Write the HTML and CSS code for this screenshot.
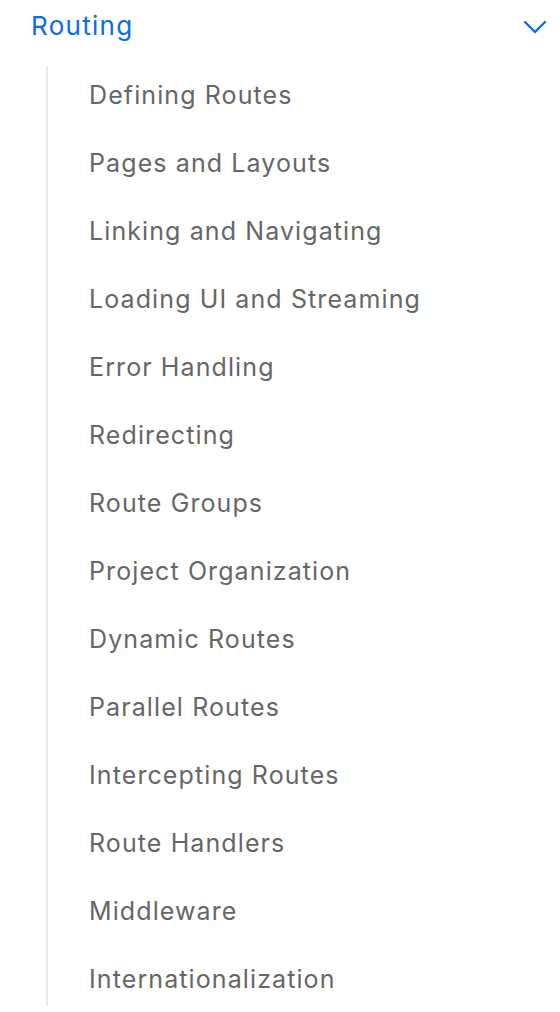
FILE: index.html
```html
<!DOCTYPE html>
<html>
<head>
<meta charset="utf-8">
<link rel="stylesheet" href="styles.css">
</head>
<body>
<nav class="sidebar">
  <div class="section-header">
    <span class="section-title">Routing</span>
    <svg class="chevron" width="24" height="16" viewBox="0 0 24 16" fill="none">
      <path d="M2 3 L12 13 L22 3" stroke="currentColor" stroke-width="2.4" stroke-linecap="round" stroke-linejoin="round"/>
    </svg>
  </div>
  <ul class="sub-list">
    <li class="sub-item">Defining Routes</li>
    <li class="sub-item">Pages and Layouts</li>
    <li class="sub-item">Linking and Navigating</li>
    <li class="sub-item">Loading UI and Streaming</li>
    <li class="sub-item">Error Handling</li>
    <li class="sub-item">Redirecting</li>
    <li class="sub-item">Route Groups</li>
    <li class="sub-item">Project Organization</li>
    <li class="sub-item">Dynamic Routes</li>
    <li class="sub-item">Parallel Routes</li>
    <li class="sub-item">Intercepting Routes</li>
    <li class="sub-item">Route Handlers</li>
    <li class="sub-item">Middleware</li>
    <li class="sub-item">Internationalization</li>
  </ul>
</nav>
</body>
</html>
```
FILE: styles.css
```css
html, body {
  margin: 0;
  padding: 0;
  background: #ffffff;
}
body {
  font-family: Inter, "Noto Sans", sans-serif;
  width: 560px;
  height: 1012px;
  overflow: hidden;
}
.sidebar {
  display: flex;
  flex-direction: column;
}
.section-header {
  height: 66px;
  display: flex;
  align-items: flex-start;
  justify-content: space-between;
  padding: 8px 13px 0 31px;
  box-sizing: border-box;
}
.section-title {
  color: #0a6cf0;
  font-size: 26px;
  line-height: 36px;
  font-weight: 400;
  letter-spacing: 1.3px;
}
.chevron {
  color: #0a6cf0;
  margin-top: 11px;
}
.sub-list {
  list-style: none;
  margin: 0 0 0 46px;
  padding: 0;
  border-left: 2px solid #ebebeb;
}
.sub-item {
  height: 68px;
  line-height: 58px;
  padding: 0 0 10px 41px;
  box-sizing: border-box;
  color: #666666;
  font-size: 25px;
  letter-spacing: 1.1px;
}
.sub-item:last-child {
  height: 56px;
  padding-bottom: 0;
}
```
